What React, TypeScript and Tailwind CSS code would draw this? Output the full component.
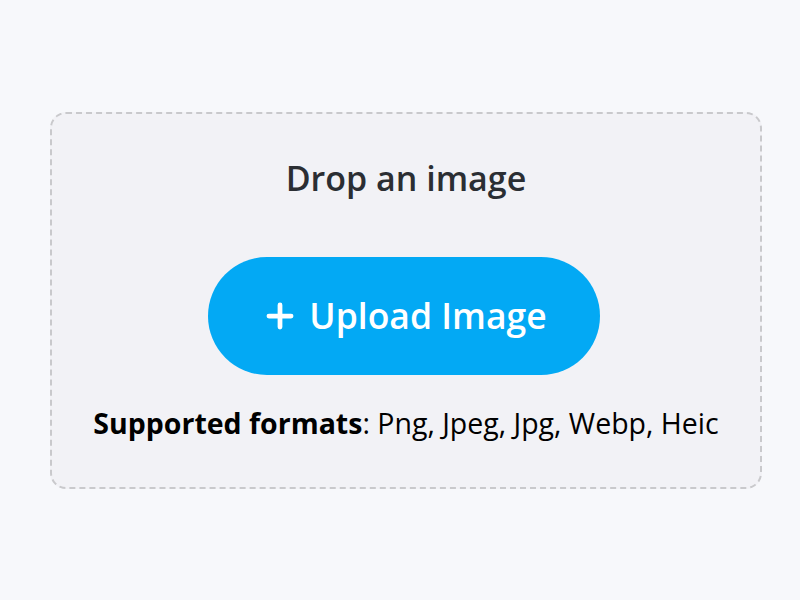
import { Plus } from "lucide-react";

export default function App() {
  return (
    <div className="w-[800px] h-[600px] bg-[#f7f8fb] flex items-center pl-[50px] font-['Open_Sans',sans-serif]">
      <div className="w-[712px] h-[377px] rounded-[16px] border-2 border-dashed border-[#c9c9cc] bg-[#f2f2f6] flex flex-col items-center">
        <h1 className="mt-[40px] text-[34px] leading-[48px] font-semibold text-[#2b2e33]">
          Drop an image
        </h1>
        <button className="mt-[55px] mr-[4px] w-[392px] h-[118px] rounded-full bg-[#03a9f4] text-white flex items-center justify-center gap-[10px]">
          <Plus size={38} strokeWidth={3} />
          <span className="text-[35.5px] font-semibold">Upload Image</span>
        </button>
        <p className="mt-[28px] text-[28.5px] leading-[40px] text-black">
          <span className="font-bold">Supported formats</span>: Png, Jpeg, Jpg, Webp, Heic
        </p>
      </div>
    </div>
  );
}
